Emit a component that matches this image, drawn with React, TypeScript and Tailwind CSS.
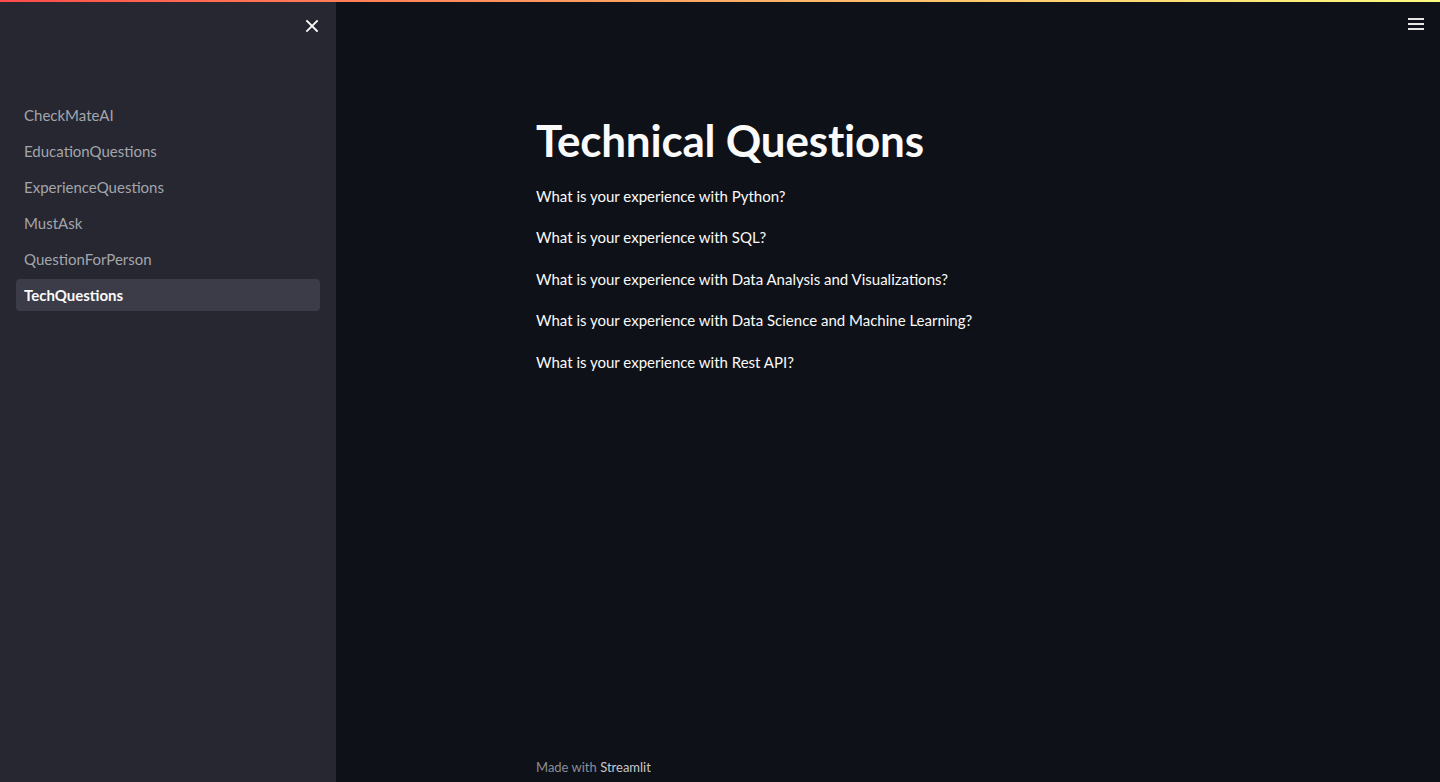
import React from "react";

const pages = [
  "CheckMateAI",
  "EducationQuestions",
  "ExperienceQuestions",
  "MustAsk",
  "QuestionForPerson",
  "TechQuestions",
];

const questions = [
  "What is your experience with Python?",
  "What is your experience with SQL?",
  "What is your experience with Data Analysis and Visualizations?",
  "What is your experience with Data Science and Machine Learning?",
  "What is your experience with Rest API?",
];

function App() {
  const active = "TechQuestions";

  return (
    <div className="relative flex h-[782px] w-full overflow-hidden bg-[#0e1117] font-['Lato','Noto_Sans',sans-serif] text-[#fafafa]">
      <div className="absolute left-0 right-0 top-0 h-[2px] bg-gradient-to-r from-[#ff4b4b] to-[#fffd80]" />

      <aside className="flex w-[336px] shrink-0 flex-col bg-[#262730]">
        <div className="flex h-[50px] items-center justify-end pr-[12px] pt-[2px]">
          <button className="flex h-6 w-6 items-center justify-center text-[#fafafa]">
            <svg width="14" height="14" viewBox="0 0 14 14" fill="none" stroke="currentColor" strokeWidth="1.8" strokeLinecap="square">
              <path d="M2 2 L12 12 M12 2 L2 12" />
            </svg>
          </button>
        </div>
        <nav className="mt-[49px] flex flex-col gap-[4px] px-4">
          {pages.map((p) => (
            <a
              key={p}
              className={
                p === active
                  ? "flex h-8 items-center rounded-[4px] bg-[#3b3c47] px-2 text-[15px] font-bold text-[#fafafa]"
                  : "flex h-8 items-center rounded-[4px] px-2 text-[15px] text-[#a3a5ad]"
              }
            >
              {p}
            </a>
          ))}
        </nav>
      </aside>

      <main className="relative flex flex-1 flex-col">
        <div className="absolute right-[15px] top-[16px]">
          <svg width="18" height="16" viewBox="0 0 18 16" fill="#e6e6e6">
            <rect x="1" y="2" width="16" height="2" />
            <rect x="1" y="7" width="16" height="2" />
            <rect x="1" y="12" width="16" height="2" />
          </svg>
        </div>

        <div className="flex flex-1 justify-center">
          <div className="flex w-[704px] flex-col pt-[110px]">
            <h1 className="text-[44px] font-bold leading-[1.4] tracking-[-0.2px] text-[#fafafa]">
              Technical Questions
            </h1>
            <div className="mt-[12px] flex flex-col gap-[17.5px]">
              {questions.map((q) => (
                <p key={q} className="text-[15px] leading-[24px] text-[#fafafa]">
                  {q}
                </p>
              ))}
            </div>
          </div>
        </div>

        <footer className="flex justify-center pb-[5px]">
          <div className="w-[704px] text-[13px] leading-[20px] text-[#8c8e95]">
            Made with <span className="text-[#c6c8ce]">Streamlit</span>
          </div>
        </footer>
      </main>
    </div>
  );
}

export default App;
